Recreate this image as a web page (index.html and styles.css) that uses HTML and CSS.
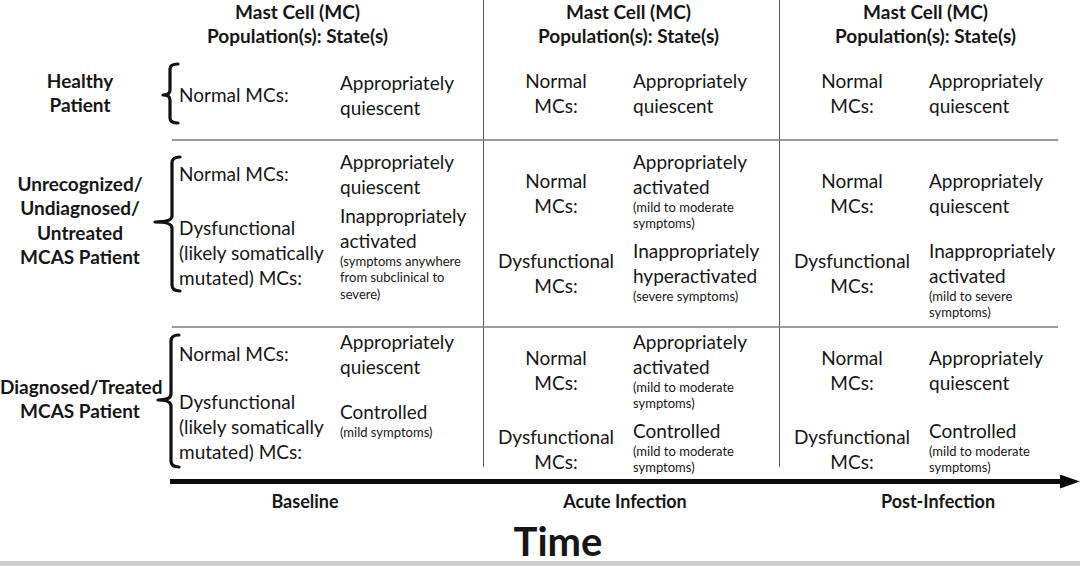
FILE: index.html
```html
<!DOCTYPE html>
<html>
<head>
<meta charset="utf-8">
<title>Mast cell states over time</title>
<link rel="stylesheet" href="styles.css">
</head>
<body>
<div class="page">
  <div class="chart">
    <!-- header row -->
    <div class="label"></div>
    <div class="brace"></div>
    <div class="head head--first">Mast Cell (MC)<br>Population(s): State(s)</div>
    <div class="head head--mid sep">Mast Cell (MC)<br>Population(s): State(s)</div>
    <div class="head head--last sep">Mast Cell (MC)<br>Population(s): State(s)</div>

    <!-- row 1: healthy -->
    <div class="label label--r1">Healthy<br>Patient</div>
    <div class="brace">
      <svg width="40" height="77" viewBox="0 0 40 77"><path d="M30 2 Q22 2 22 7 L22 28 Q22 33 15 33 Q22 33 22 38 L22 56 Q22 61 30 61"/></svg>
    </div>
    <div class="cell cell--top">
      <div class="pair pair--wide"><div class="name">Normal MCs:</div><div class="state">Appropriately<br>quiescent</div></div>
    </div>
    <div class="cell cell--top cell--up sep">
      <div class="pair pair--narrow"><div class="name">Normal<br>MCs:</div><div class="state">Appropriately<br>quiescent</div></div>
    </div>
    <div class="cell cell--top cell--up sep">
      <div class="pair pair--narrow"><div class="name">Normal<br>MCs:</div><div class="state">Appropriately<br>quiescent</div></div>
    </div>

    <!-- row 2: unrecognized -->
    <div class="label label--r2">Unrecognized/<br>Undiagnosed/<br>Untreated<br>MCAS Patient</div>
    <div class="brace">
      <svg width="40" height="187" viewBox="0 0 40 187"><path d="M32 18 Q24 18 24 24 L24 77 Q24 83 7 83 Q24 83 24 89 L24 146 Q24 152 32 152"/></svg>
    </div>
    <div class="cell cell--top ruled gap4">
      <div class="pair pair--wide"><div class="name">Normal MCs:</div><div class="state">Appropriately<br>quiescent</div></div>
      <div class="pair pair--wide"><div class="name">Dysfunctional<br>(likely somatically<br>mutated) MCs:</div><div class="state">Inappropriately<br>activated<div class="note">(symptoms anywhere<br>from subclinical to<br>severe)</div></div></div>
    </div>
    <div class="cell cell--top ruled sep gap6">
      <div class="pair pair--narrow"><div class="name name--low">Normal<br>MCs:</div><div class="state">Appropriately<br>activated<div class="note">(mild to moderate<br>symptoms)</div></div></div>
      <div class="pair pair--narrow"><div class="name name--low2">Dysfunctional<br>MCs:</div><div class="state">Inappropriately<br>hyperactivated<div class="note">(severe symptoms)</div></div></div>
    </div>
    <div class="cell cell--top ruled sep gap6">
      <div class="pair pair--narrow pair--tall pair--drop"><div class="name">Normal<br>MCs:</div><div class="state">Appropriately<br>quiescent</div></div>
      <div class="pair pair--narrow pair--nameup"><div class="name">Dysfunctional<br>MCs:</div><div class="state">Inappropriately<br>activated<div class="note">(mild to severe<br>symptoms)</div></div></div>
    </div>

    <!-- row 3: diagnosed -->
    <div class="label label--r3">Diagnosed/Treated<br>MCAS Patient</div>
    <div class="brace">
      <svg width="40" height="141" viewBox="0 0 40 141"><path d="M31 9 Q23 9 23 15 L23 68 Q23 74 10 74 Q23 74 23 80 L23 135 Q23 141 31 141"/></svg>
    </div>
    <div class="cell cell--low ruled gap10">
      <div class="pair pair--wide"><div class="name">Normal MCs:</div><div class="state">Appropriately<br>quiescent</div></div>
      <div class="pair pair--wide pair--top"><div class="name">Dysfunctional<br>(likely somatically<br>mutated) MCs:</div><div class="state">Controlled<div class="note">(mild symptoms)</div></div></div>
    </div>
    <div class="cell cell--low ruled sep gap6">
      <div class="pair pair--narrow"><div class="name">Normal<br>MCs:</div><div class="state">Appropriately<br>activated<div class="note">(mild to moderate<br>symptoms)</div></div></div>
      <div class="pair pair--narrow"><div class="name name--low2">Dysfunctional<br>MCs:</div><div class="state">Controlled<div class="note">(mild to moderate<br>symptoms)</div></div></div>
    </div>
    <div class="cell cell--low ruled sep gap6">
      <div class="pair pair--narrow pair--tall"><div class="name">Normal<br>MCs:</div><div class="state">Appropriately<br>quiescent</div></div>
      <div class="pair pair--narrow"><div class="name name--low2">Dysfunctional<br>MCs:</div><div class="state">Controlled<div class="note">(mild to moderate<br>symptoms)</div></div></div>
    </div>
  </div>

  <div class="axis">
    <svg width="1080" height="15" viewBox="0 0 1080 15"><rect x="170" y="5" width="894" height="5"/><polygon points="1060,0.5 1080,7.5 1060,14.5"/></svg>
  </div>

  <div class="phases">
    <div>Baseline</div>
    <div>Acute Infection</div>
    <div>Post-Infection</div>
  </div>

  <div class="time">Time</div>
  <div class="bar"></div>
</div>
</body>
</html>
```

FILE: styles.css
```css
* { box-sizing: border-box; }

body {
  margin: 0;
  background: #fff;
  color: #161616;
  font-family: Lato, "Open Sans", sans-serif;
}

.page {
  width: 1080px;
  height: 566px;
  display: flex;
  flex-direction: column;
  overflow: hidden;
}

.chart {
  display: grid;
  grid-template-columns: 160px 12px 311px 296px 279px;
  grid-template-rows: 62px 77px 187px 141px;
}

.head {
  font-weight: 700;
  font-size: 19px;
  line-height: 24px;
  text-align: center;
  white-space: nowrap;
}
.head--first { padding-right: 60px; }
.head--mid { padding-right: 6px; }
.head--last { padding-left: 13px; }

.sep { border-left: 1px solid #5a5a5a; }
.ruled { border-top: 2px solid #9c9c9c; }

.label {
  font-weight: 700;
  font-size: 19px;
  line-height: 24.5px;
  text-align: center;
  white-space: nowrap;
}
.label--r1 { padding-top: 6.75px; }
.label--r2 { padding-top: 32.75px; }
.label--r3 { padding-top: 48.75px; }

.brace svg {
  display: block;
  margin-left: -12px;
  overflow: visible;
}
.brace path {
  fill: none;
  stroke: #111;
  stroke-width: 3.2;
  stroke-linecap: round;
  stroke-linejoin: round;
}

.cell {
  display: flex;
  flex-direction: column;
  padding-left: 7px;
  font-size: 19px;
  line-height: 25px;
}
.cell--top { padding-top: 7.5px; }
.cell--up { padding-top: 6px; }
.cell--low { padding-top: 0.5px; }
.gap4 { gap: 4px; }
.gap6 { gap: 6px; }
.gap10 { gap: 10px; }

.pair {
  display: grid;
  align-items: center;
  white-space: nowrap;
}
.pair--wide { grid-template-columns: 161px auto; }
.pair--narrow { grid-template-columns: 130px auto; column-gap: 12px; }
.pair--narrow .name { text-align: center; }
.pair--tall { min-height: 83px; }
.pair--drop { padding-top: 6px; }
.pair--top .state { align-self: start; padding-top: 10px; }
.pair--nameup .name { align-self: start; padding-top: 10px; }
.name--low { padding-top: 6px; }
.name--low2 { padding-top: 4px; }

.note {
  font-size: 13px;
  line-height: 16.5px;
}

.axis svg { display: block; margin-top: 7px; }
.axis svg rect, .axis svg polygon { fill: #0a0a0a; }

.phases {
  display: grid;
  grid-template-columns: 270px 370px 256px;
  margin-left: 170px;
  margin-top: 1px;
  font-weight: 700;
  font-size: 18px;
  line-height: 22px;
  text-align: center;
}

.time {
  margin-top: 10px;
  padding-left: 36px;
  text-align: center;
  font-weight: 700;
  font-size: 40px;
  line-height: 39px;
}

.bar {
  margin-top: auto;
  flex: none;
  height: 6px;
  background: #cdcdcd;
}
```
